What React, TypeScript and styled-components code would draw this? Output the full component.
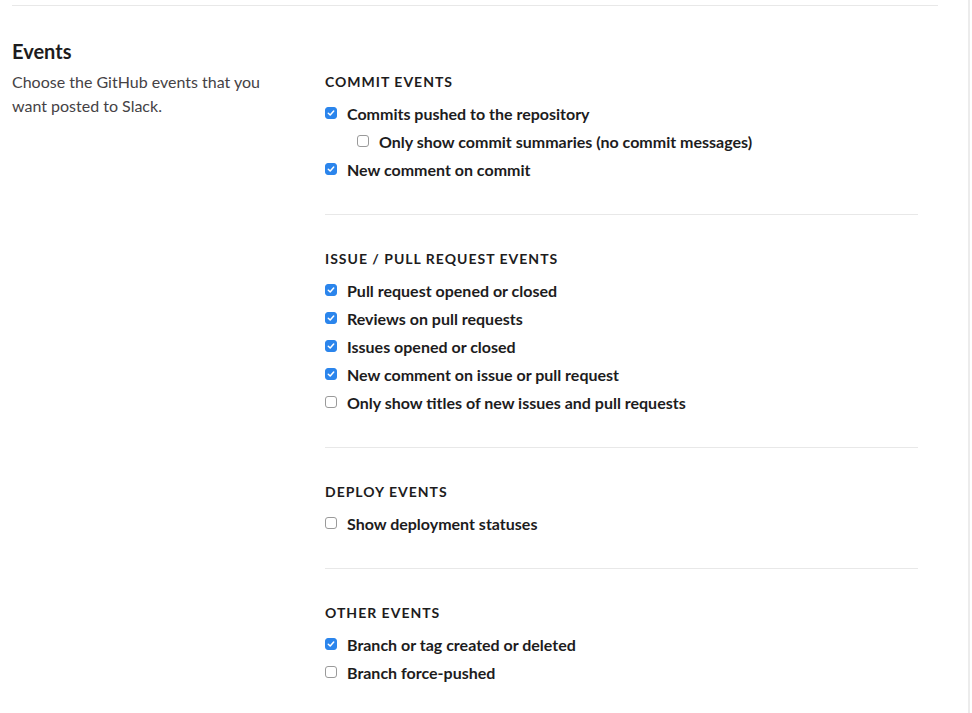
import React from 'react';
import styled, { createGlobalStyle } from 'styled-components';

const GlobalStyle = createGlobalStyle`
  html, body {
    margin: 0;
    padding: 0;
    background: #ffffff;
  }
  body {
    font-family: Lato, "Noto Sans", "Liberation Sans", sans-serif;
    color: #1d1c1d;
    -webkit-font-smoothing: antialiased;
  }
`;

interface EventOption {
  label: string;
  checked: boolean;
  nested?: boolean;
}

interface EventGroup {
  title: string;
  options: EventOption[];
}

const groups: EventGroup[] = [
  {
    title: 'Commit events',
    options: [
      { label: 'Commits pushed to the repository', checked: true },
      { label: 'Only show commit summaries (no commit messages)', checked: false, nested: true },
      { label: 'New comment on commit', checked: true },
    ],
  },
  {
    title: 'Issue / pull request events',
    options: [
      { label: 'Pull request opened or closed', checked: true },
      { label: 'Reviews on pull requests', checked: true },
      { label: 'Issues opened or closed', checked: true },
      { label: 'New comment on issue or pull request', checked: true },
      { label: 'Only show titles of new issues and pull requests', checked: false },
    ],
  },
  {
    title: 'Deploy events',
    options: [{ label: 'Show deployment statuses', checked: false }],
  },
  {
    title: 'Other events',
    options: [
      { label: 'Branch or tag created or deleted', checked: true },
      { label: 'Branch force-pushed', checked: false },
    ],
  },
];

const Page = styled.div`
  width: 970px;
  min-height: 713px;
  border-right: 2px solid #ececec;
  box-sizing: border-box;
  padding: 5px 32px 0 12px;
`;

const TopRule = styled.hr`
  margin: 0;
  border: none;
  border-top: 1px solid #e8e8e8;
  width: 926px;
`;

const SettingsRow = styled.div`
  display: grid;
  grid-template-columns: 313px 593px;
  padding-top: 31px;
`;

const Intro = styled.div`
  display: flex;
  flex-direction: column;
`;

const Heading = styled.h2`
  margin: 0;
  font-size: 20px;
  line-height: 28px;
  font-weight: 700;
  color: #1d1c1d;
`;

const Description = styled.p`
  margin: 5px 0 0;
  font-size: 16px;
  line-height: 24px;
  color: #454245;
  width: 270px;
`;

const Groups = styled.div`
  display: flex;
  flex-direction: column;
`;

const Group = styled.section`
  padding: 34px 0 31px;
  border-bottom: 1px solid #e8e8e8;

  &:first-child {
    padding-top: 35px;
  }

  &:last-child {
    border-bottom: none;
  }
`;

const GroupTitle = styled.h3`
  margin: 0 0 7px;
  font-size: 14px;
  line-height: 20px;
  font-weight: 700;
  letter-spacing: 1px;
  text-transform: uppercase;
  color: #1d1c1d;
`;

const OptionRow = styled.label<{ $nested?: boolean }>`
  display: flex;
  align-items: center;
  gap: 10px;
  height: 28px;
  padding-left: ${p => (p.$nested ? '32px' : '0')};
  font-size: 16px;
  font-weight: 700;
  color: #1d1c1d;
`;

const Box = styled.span<{ $checked: boolean }>`
  flex: none;
  width: 12px;
  height: 12px;
  box-sizing: border-box;
  border-radius: 3px;
  display: flex;
  align-items: center;
  justify-content: center;
  background: ${p => (p.$checked ? '#2b85ec' : '#ffffff')};
  border: 1px solid ${p => (p.$checked ? '#2b85ec' : '#9a9a9a')};
`;

const Check = () => (
  <svg width="8" height="8" viewBox="0 0 8 8" fill="none">
    <path d="M1.3 4.2 L3.2 6 L6.7 2" stroke="#ffffff" strokeWidth="1.5" strokeLinecap="round" strokeLinejoin="round" />
  </svg>
);

export default function App() {
  return (
    <>
      <GlobalStyle />
      <Page>
        <TopRule />
        <SettingsRow>
          <Intro>
            <Heading>Events</Heading>
            <Description>Choose the GitHub events that you want posted to Slack.</Description>
          </Intro>
          <Groups>
            {groups.map(group => (
              <Group key={group.title}>
                <GroupTitle>{group.title}</GroupTitle>
                {group.options.map(option => (
                  <OptionRow key={option.label} $nested={option.nested}>
                    <Box $checked={option.checked}>{option.checked && <Check />}</Box>
                    {option.label}
                  </OptionRow>
                ))}
              </Group>
            ))}
          </Groups>
        </SettingsRow>
      </Page>
    </>
  );
}
